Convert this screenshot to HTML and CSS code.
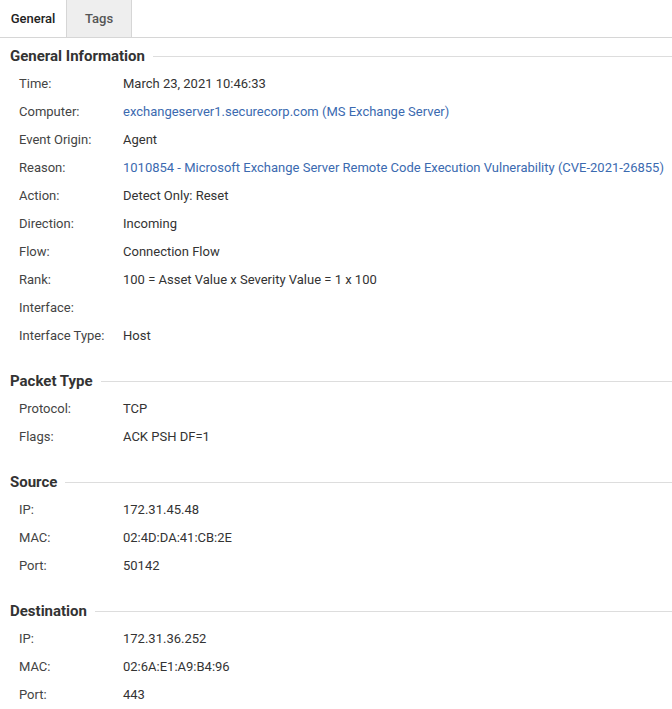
FILE: index.html
```html
<!DOCTYPE html>
<html>
<head>
<meta charset="utf-8">
<link rel="stylesheet" href="styles.css">
</head>
<body>
<div class="tabs">
  <div class="tab active">General</div>
  <div class="tab">Tags</div>
</div>
<div class="content">
  <section class="section">
    <h2 class="heading"><span>General Information</span></h2>
    <div class="row"><span class="label">Time:</span><span class="value">March 23, 2021 10:46:33</span></div>
    <div class="row"><span class="label">Computer:</span><span class="value link">exchangeserver1.securecorp.com (MS Exchange Server)</span></div>
    <div class="row"><span class="label">Event Origin:</span><span class="value">Agent</span></div>
    <div class="row"><span class="label">Reason:</span><span class="value link">1010854 - Microsoft Exchange Server Remote Code Execution Vulnerability (CVE-2021-26855)</span></div>
    <div class="row"><span class="label">Action:</span><span class="value">Detect Only: Reset</span></div>
    <div class="row"><span class="label">Direction:</span><span class="value">Incoming</span></div>
    <div class="row"><span class="label">Flow:</span><span class="value">Connection Flow</span></div>
    <div class="row"><span class="label">Rank:</span><span class="value">100 = Asset Value x Severity Value = 1 x 100</span></div>
    <div class="row"><span class="label">Interface:</span><span class="value"></span></div>
    <div class="row"><span class="label">Interface Type:</span><span class="value">Host</span></div>
  </section>
  <section class="section">
    <h2 class="heading"><span>Packet Type</span></h2>
    <div class="row"><span class="label">Protocol:</span><span class="value">TCP</span></div>
    <div class="row"><span class="label">Flags:</span><span class="value">ACK PSH DF=1</span></div>
  </section>
  <section class="section">
    <h2 class="heading"><span>Source</span></h2>
    <div class="row"><span class="label">IP:</span><span class="value">172.31.45.48</span></div>
    <div class="row"><span class="label">MAC:</span><span class="value">02:4D:DA:41:CB:2E</span></div>
    <div class="row"><span class="label">Port:</span><span class="value">50142</span></div>
  </section>
  <section class="section">
    <h2 class="heading"><span>Destination</span></h2>
    <div class="row"><span class="label">IP:</span><span class="value">172.31.36.252</span></div>
    <div class="row"><span class="label">MAC:</span><span class="value">02:6A:E1:A9:B4:96</span></div>
    <div class="row"><span class="label">Port:</span><span class="value">443</span></div>
  </section>
</div>
</body>
</html>
```
FILE: styles.css
```css
html, body {
  margin: 0;
  padding: 0;
  background: #fff;
}
body {
  font-family: Roboto, "Liberation Sans", sans-serif;
  font-size: 13px;
  color: #333;
  width: 672px;
}
.tabs {
  display: flex;
  height: 37px;
  border-bottom: 1px solid #d6d6d6;
}
.tab {
  box-sizing: border-box;
  width: 66px;
  display: flex;
  align-items: center;
  justify-content: center;
  font-size: 13px;
  font-weight: 500;
  color: #555;
  background: #eee;
  border-left: 1px solid #d6d6d6;
  border-right: 1px solid #d6d6d6;
}
.tab.active {
  width: 66px;
  background: #fff;
  color: #222;
  border: none;
}
.content {
  display: flex;
  flex-direction: column;
  gap: 22px;
  padding-top: 8px;
}
.heading {
  display: flex;
  align-items: center;
  margin: 0 0 3px 0;
  padding-left: 10px;
  height: 20px;
  font-size: 15px;
  font-weight: 700;
  color: #333;
}
.heading::after {
  content: "";
  flex: 1;
  height: 1px;
  background: #ddd;
  margin-left: 8px;
}
.row {
  display: flex;
  height: 28px;
  align-items: center;
  padding-left: 19px;
}
.label {
  width: 104px;
  flex: none;
  color: #444;
}
.value {
  white-space: nowrap;
  color: #333;
}
.value.link {
  color: #3b6ab0;
}
```
